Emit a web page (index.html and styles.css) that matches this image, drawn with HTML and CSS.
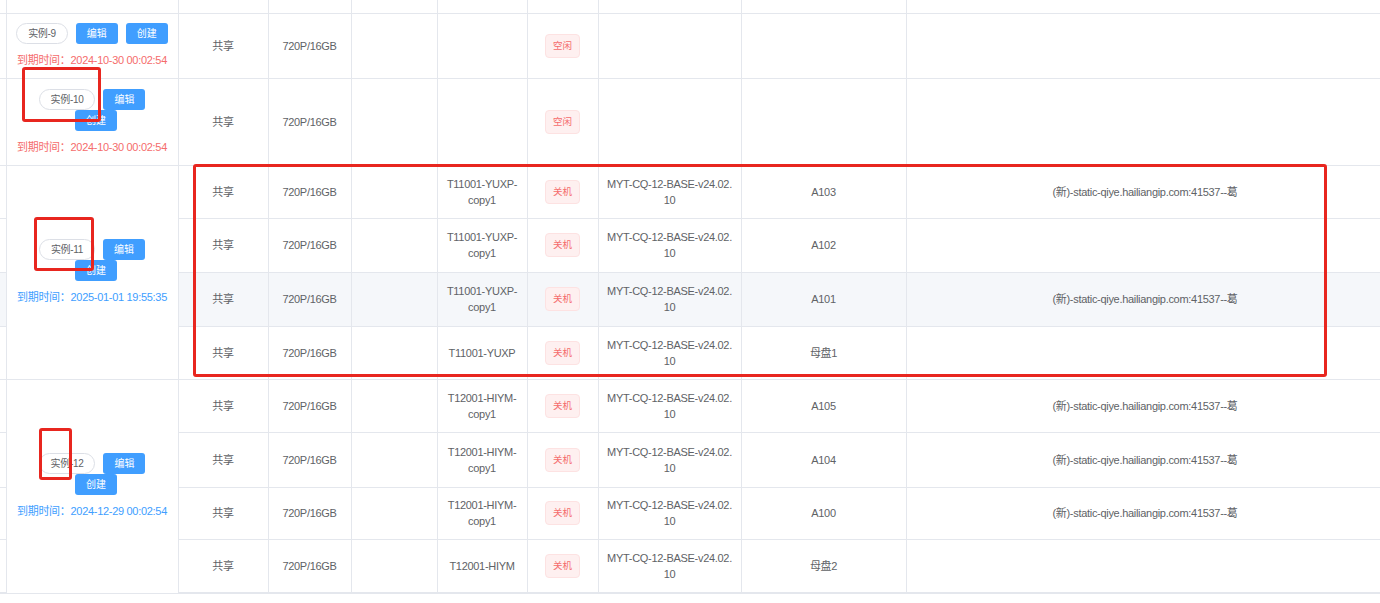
FILE: index.html
```html
<!DOCTYPE html>
<html lang="zh-CN">
<head>
<meta charset="utf-8">
<title>实例列表</title>
<link rel="stylesheet" href="styles.css">
</head>
<body>
<div class="wrap">
  <table class="grid">
    <colgroup>
      <col class="c0"><col class="c1"><col class="c2"><col class="c3"><col class="c4">
      <col class="c5"><col class="c6"><col class="c7"><col class="c8"><col class="c9">
    </colgroup>
    <tbody>
      <tr class="r-cut">
        <td class="edge"></td><td></td><td></td><td></td><td></td><td></td><td></td><td></td><td></td><td></td>
      </tr>
      <tr class="r65">
        <td class="edge"></td>
        <td class="inst">
          <div class="ops"><span class="tag">实例-9</span><button class="btn">编辑</button><button class="btn">创建</button></div>
          <div class="due red">到期时间：2024-10-30 00:02:54</div>
        </td>
        <td>共享</td><td>720P/16GB</td><td></td><td></td>
        <td><span class="state">空闲</span></td><td></td><td></td><td></td>
      </tr>
      <tr class="r87">
        <td class="edge"></td>
        <td class="inst">
          <div class="ops"><span class="tag">实例-10</span><button class="btn">编辑</button><button class="btn">创建</button></div>
          <div class="due red">到期时间：2024-10-30 00:02:54</div>
        </td>
        <td>共享</td><td>720P/16GB</td><td></td><td></td>
        <td><span class="state">空闲</span></td><td></td><td></td><td></td>
      </tr>

      <tr class="r53">
        <td class="edge"></td>
        <td class="inst" rowspan="4">
          <div class="ops"><span class="tag">实例-11</span><button class="btn">编辑</button><button class="btn">创建</button></div>
          <div class="due blue">到期时间：2025-01-01 19:55:35</div>
        </td>
        <td>共享</td><td>720P/16GB</td><td></td><td>T11001-YUXP-<br>copy1</td>
        <td><span class="state">关机</span></td><td>MYT-CQ-12-BASE-v24.02.<br>10</td><td>A103</td>
        <td>(新)-static-qiye.hailiangip.com:41537--葛</td>
      </tr>
      <tr class="r54">
        <td class="edge"></td>
        <td>共享</td><td>720P/16GB</td><td></td><td>T11001-YUXP-<br>copy1</td>
        <td><span class="state">关机</span></td><td>MYT-CQ-12-BASE-v24.02.<br>10</td><td>A102</td>
        <td></td>
      </tr>
      <tr class="r54 hover">
        <td class="edge"></td>
        <td>共享</td><td>720P/16GB</td><td></td><td>T11001-YUXP-<br>copy1</td>
        <td><span class="state">关机</span></td><td>MYT-CQ-12-BASE-v24.02.<br>10</td><td>A101</td>
        <td>(新)-static-qiye.hailiangip.com:41537--葛</td>
      </tr>
      <tr class="r53">
        <td class="edge"></td>
        <td>共享</td><td>720P/16GB</td><td></td><td>T11001-YUXP</td>
        <td><span class="state">关机</span></td><td>MYT-CQ-12-BASE-v24.02.<br>10</td><td>母盘1</td>
        <td></td>
      </tr>

      <tr class="r53">
        <td class="edge"></td>
        <td class="inst" rowspan="4">
          <div class="ops"><span class="tag">实例-12</span><button class="btn">编辑</button><button class="btn">创建</button></div>
          <div class="due blue">到期时间：2024-12-29 00:02:54</div>
        </td>
        <td>共享</td><td>720P/16GB</td><td></td><td>T12001-HIYM-<br>copy1</td>
        <td><span class="state">关机</span></td><td>MYT-CQ-12-BASE-v24.02.<br>10</td><td>A105</td>
        <td>(新)-static-qiye.hailiangip.com:41537--葛</td>
      </tr>
      <tr class="r55">
        <td class="edge"></td>
        <td>共享</td><td>720P/16GB</td><td></td><td>T12001-HIYM-<br>copy1</td>
        <td><span class="state">关机</span></td><td>MYT-CQ-12-BASE-v24.02.<br>10</td><td>A104</td>
        <td>(新)-static-qiye.hailiangip.com:41537--葛</td>
      </tr>
      <tr class="r52">
        <td class="edge"></td>
        <td>共享</td><td>720P/16GB</td><td></td><td>T12001-HIYM-<br>copy1</td>
        <td><span class="state">关机</span></td><td>MYT-CQ-12-BASE-v24.02.<br>10</td><td>A100</td>
        <td>(新)-static-qiye.hailiangip.com:41537--葛</td>
      </tr>
      <tr class="r54 last">
        <td class="edge"></td>
        <td>共享</td><td>720P/16GB</td><td></td><td>T12001-HIYM</td>
        <td><span class="state">关机</span></td><td>MYT-CQ-12-BASE-v24.02.<br>10</td><td>母盘2</td>
        <td></td>
      </tr>
    </tbody>
  </table>

  <div class="mark m1"></div>
  <div class="mark m2"></div>
  <div class="mark m3"></div>
  <div class="mark m4"></div>
</div>
</body>
</html>
```

FILE: styles.css
```css
* { box-sizing: border-box; }
html, body { margin: 0; padding: 0; background: #fff; }
body {
  font-family: "Liberation Sans", "Noto Sans CJK SC", sans-serif;
  font-size: 11px;
  letter-spacing: -0.3px;
  color: #606266;
  overflow: hidden;
}
.wrap {
  position: relative;
  width: 1380px;
  height: 603px;
  overflow: hidden;
}
.grid {
  border-collapse: collapse;
  table-layout: fixed;
  width: 1384px;
}
.c0 { width: 6px; }
.c1 { width: 172px; }
.c2 { width: 90px; }
.c3 { width: 83px; }
.c4 { width: 86px; }
.c5 { width: 90px; }
.c6 { width: 71px; }
.c7 { width: 143px; }
.c8 { width: 165px; }
.c9 { width: 478px; }

.grid td {
  border-right: 1px solid #e4e7ed;
  border-bottom: 1px solid #e4e7ed;
  padding: 0 8px;
  text-align: center;
  vertical-align: middle;
  line-height: 16px;
  white-space: nowrap;
}
.grid td.edge { padding: 0; }
.grid tr.last td { border-bottom: 2px solid #e4e7ed; }
.grid tr.hover td { background: #f5f7fa; }

.r-cut { height: 13px; }
.r65 { height: 65px; }
.r87 { height: 87px; }
.r52 { height: 52px; }
.r53 { height: 53px; }
.r54 { height: 54px; }
.r55 { height: 55px; }

.grid td.inst { white-space: normal; padding: 0 8px; background: #fff; }
.ops { font-size: 0; line-height: 0; }
.tag {
  display: inline-block;
  vertical-align: top;
  height: 21px;
  line-height: 19px;
  padding: 0 11px;
  border: 1px solid #dcdfe6;
  border-radius: 11px;
  background: #fff;
  color: #606266;
  font-size: 10px;
  letter-spacing: -0.3px;
}
.btn {
  display: inline-block;
  vertical-align: top;
  height: 21px;
  line-height: 21px;
  padding: 0 11px;
  margin: 0 0 0 8px;
  border: 0;
  border-radius: 3px;
  background: #409eff;
  color: #fff;
  font-family: inherit;
  font-size: 10px;
  letter-spacing: 0;
}
.due {
  margin-top: 8px;
  font-size: 11px;
  line-height: 16px;
  white-space: nowrap;
}
.due.red { color: #f56c6c; }
.due.blue { color: #409eff; }

.state {
  display: inline-block;
  vertical-align: middle;
  height: 24px;
  line-height: 22px;
  padding: 0 7px;
  border: 1px solid #fde2e2;
  border-radius: 4px;
  background: #fef0f0;
  color: #f56c6c;
  font-size: 9.5px;
  letter-spacing: 0;
}

.mark {
  position: absolute;
  border: 3px solid #e8261f;
  border-radius: 3px;
  pointer-events: none;
}
.m1 { left: 22px; top: 67px; width: 79px; height: 55px; }
.m2 { left: 34px; top: 217px; width: 60px; height: 54px; }
.m3 { left: 39px; top: 428px; width: 33px; height: 52px; }
.m4 { left: 193px; top: 164px; width: 1134px; height: 213px; }
```
